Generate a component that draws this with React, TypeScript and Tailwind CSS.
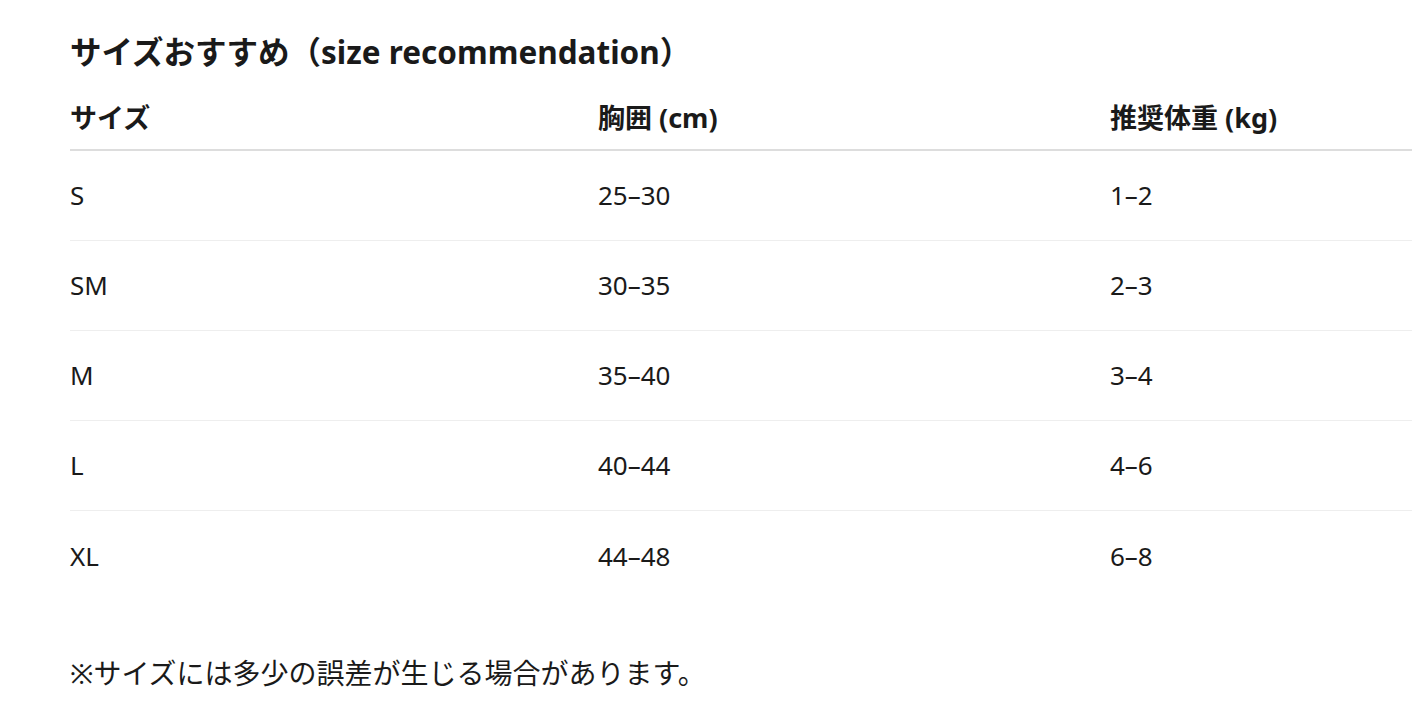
const rows = [
  { size: "S", chest: "25–30", weight: "1–2" },
  { size: "SM", chest: "30–35", weight: "2–3" },
  { size: "M", chest: "35–40", weight: "3–4" },
  { size: "L", chest: "40–44", weight: "4–6" },
  { size: "XL", chest: "44–48", weight: "6–8" },
]

export default function App() {
  return (
    <div className="min-h-[717px] bg-white pl-[70px] pt-[32px] font-['Noto_Sans','Noto_Sans_CJK_JP',sans-serif] text-[#1a1a1a]">
      <h2 className="text-[31.5px] font-bold leading-[40px]">
        サイズおすすめ（size recommendation）
      </h2>

      <div className="mt-[15px]">
        <div className="grid h-[64px] grid-cols-[528px_512px_1fr] items-center border-b-2 border-[#dddddd] text-[27px] font-bold">
          <div>サイズ</div>
          <div>胸囲 (cm)</div>
          <div>推奨体重 (kg)</div>
        </div>
        {rows.map((r, i) => (
          <div
            key={r.size}
            className={
              i < rows.length - 1
                ? "grid h-[90px] grid-cols-[528px_512px_1fr] items-center border-b border-[#eeeeee] text-[26px]"
                : "grid h-[90px] grid-cols-[528px_512px_1fr] items-center text-[26px]"
            }
          >
            <div>{r.size}</div>
            <div>{r.chest}</div>
            <div>{r.weight}</div>
          </div>
        ))}
      </div>

      <p className="mt-[52px] text-[28px] leading-[40px]">
        ※サイズには多少の誤差が生じる場合があります。
      </p>
    </div>
  )
}
